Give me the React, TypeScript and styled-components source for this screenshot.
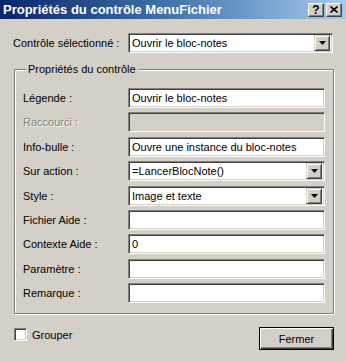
import React from "react";
import styled, { createGlobalStyle } from "styled-components";

const Global = createGlobalStyle`
  html, body { margin: 0; padding: 0; background: #d4d0c8; }
  body { font-family: "Liberation Sans", Arial, sans-serif; font-size: 11px; color: #000; }
`;

const Window = styled.div`
  width: 346px;
  height: 362px;
  background: #d4d0c8;
  display: flex;
  flex-direction: column;
  box-sizing: border-box;
  overflow: hidden;
`;

const TitleBar = styled.div`
  height: 19px;
  flex: none;
  display: flex;
  align-items: center;
  padding: 0 4px 0 3px;
  background: linear-gradient(to right, #0a246a 0%, #3a6ea5 45%, #a6caf0 100%);
`;

const Title = styled.div`
  flex: 1;
  color: #fff;
  font-weight: bold;
  font-size: 13px;
  white-space: nowrap;
`;

const CaptionButtons = styled.div`
  display: flex;
  gap: 2px;
`;

const CaptionButton = styled.div`
  width: 16px;
  height: 14px;
  box-sizing: border-box;
  background: #d4d0c8;
  border-top: 1px solid #fff;
  border-left: 1px solid #fff;
  border-right: 1px solid #404040;
  border-bottom: 1px solid #404040;
  box-shadow: inset -1px -1px 0 #808080;
  display: flex;
  align-items: center;
  justify-content: center;
  font-weight: bold;
  font-size: 12px;
  line-height: 1;
  color: #000;
`;

const Content = styled.div`
  flex: 1;
  display: flex;
  flex-direction: column;
  padding: 14px 12px 0 13px;
`;

const TopRow = styled.div`
  display: flex;
  align-items: center;
`;

const Label = styled.div<{ $disabled?: boolean }>`
  white-space: nowrap;
  color: ${(p) => (p.$disabled ? "#808080" : "#000")};
  text-shadow: ${(p) => (p.$disabled ? "1px 1px 0 #fff" : "none")};
`;

const TopLabel = styled(Label)`
  width: 115px;
`;

const Sunken = styled.div<{ $width: number; $disabled?: boolean }>`
  width: ${(p) => p.$width}px;
  height: 20px;
  box-sizing: border-box;
  background: ${(p) => (p.$disabled ? "#d4d0c8" : "#fff")};
  border-style: solid;
  border-width: 1px;
  border-color: #808080 #fff #fff #808080;
  box-shadow: inset 1px 1px 0 #404040, inset -1px -1px 0 #d4d0c8;
  display: flex;
  align-items: center;
  padding: 0 2px 0 3px;
  white-space: nowrap;
  overflow: hidden;
`;

const FieldText = styled.span`
  flex: 1;
  overflow: hidden;
`;

const DropButton = styled.div`
  width: 16px;
  height: 16px;
  flex: none;
  box-sizing: border-box;
  background: #d4d0c8;
  border-style: solid;
  border-width: 1px;
  border-color: #d4d0c8 #404040 #404040 #d4d0c8;
  box-shadow: inset 1px 1px 0 #fff, inset -1px -1px 0 #808080;
  display: flex;
  align-items: center;
  justify-content: center;
`;

const Arrow = () => (
  <svg width="7" height="4" viewBox="0 0 7 4">
    <path d="M0 0H7L3.5 4Z" fill="#000" />
  </svg>
);

const Group = styled.fieldset`
  margin: 10px 0 0 1px;
  width: 320px;
  box-sizing: border-box;
  padding: 12px 8px 10px 8px;
  border: 1px solid #808080;
  box-shadow: inset 1px 1px 0 #fff, 1px 1px 0 #fff;
  min-width: 0;
`;

const Legend = styled.legend`
  padding: 0 2px;
  margin-left: 3px;
  background: #d4d0c8;
  font-size: 11px;
  line-height: 13px;
`;

const Rows = styled.div`
  display: grid;
  grid-template-columns: 105px 197px;
  grid-auto-rows: 20px;
  row-gap: 4.4px;
  align-items: center;
`;

const Footer = styled.div`
  margin-top: 13px;
  display: flex;
  align-items: flex-start;
  justify-content: space-between;
  padding-left: 1px;
`;

const CheckWrap = styled.div`
  display: flex;
  align-items: center;
  gap: 5px;
  margin-top: 1px;
`;

const CheckBox = styled.div`
  width: 13px;
  height: 13px;
  box-sizing: border-box;
  background: #fff;
  border-style: solid;
  border-width: 1px;
  border-color: #808080 #fff #fff #808080;
  box-shadow: inset 1px 1px 0 #404040, inset -1px -1px 0 #d4d0c8;
`;

const Button = styled.div`
  width: 75px;
  height: 23px;
  box-sizing: border-box;
  border: 1px solid #000;
  background: #d4d0c8;
  box-shadow: inset 1px 1px 0 #fff, inset -1px -1px 0 #404040, inset -2px -2px 0 #808080;
  display: flex;
  align-items: center;
  justify-content: center;
`;

type Row = { label: string; value?: string; disabled?: boolean; combo?: boolean };

const rows: Row[] = [
  { label: "Légende :", value: "Ouvrir le bloc-notes" },
  { label: "Raccourci :", disabled: true },
  { label: "Info-bulle :", value: "Ouvre une instance du bloc-notes" },
  { label: "Sur action :", value: "=LancerBlocNote()", combo: true },
  { label: "Style :", value: "Image et texte", combo: true },
  { label: "Fichier Aide :" },
  { label: "Contexte Aide :", value: "0" },
  { label: "Paramètre :" },
  { label: "Remarque :" },
];

export default function App() {
  return (
    <>
      <Global />
      <Window>
        <TitleBar>
          <Title>Propriétés du contrôle MenuFichier</Title>
          <CaptionButtons>
            <CaptionButton>?</CaptionButton>
            <CaptionButton>
              <svg width="8" height="7" viewBox="0 0 8 7">
                <path d="M0.5 0.5L7.5 6.5M7.5 0.5L0.5 6.5" stroke="#000" strokeWidth="1.6" />
              </svg>
            </CaptionButton>
          </CaptionButtons>
        </TitleBar>
        <Content>
          <TopRow>
            <TopLabel>Contrôle sélectionné :</TopLabel>
            <Sunken $width={205}>
              <FieldText>Ouvrir le bloc-notes</FieldText>
              <DropButton>
                <Arrow />
              </DropButton>
            </Sunken>
          </TopRow>
          <Group>
            <Legend>Propriétés du contrôle</Legend>
            <Rows>
              {rows.map((r) => (
                <React.Fragment key={r.label}>
                  <Label $disabled={r.disabled}>{r.label}</Label>
                  <Sunken $width={197} $disabled={r.disabled}>
                    <FieldText>{r.value ?? ""}</FieldText>
                    {r.combo && (
                      <DropButton>
                        <Arrow />
                      </DropButton>
                    )}
                  </Sunken>
                </React.Fragment>
              ))}
            </Rows>
          </Group>
          <Footer>
            <CheckWrap>
              <CheckBox />
              <Label>Grouper</Label>
            </CheckWrap>
            <Button>Fermer</Button>
          </Footer>
        </Content>
      </Window>
    </>
  );
}
